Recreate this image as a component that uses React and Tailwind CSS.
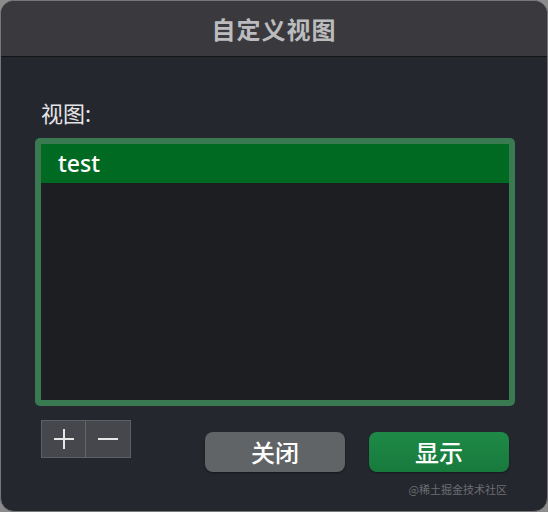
import React from 'react';

export default function App() {
  return (
    <div
      className="w-[548px] h-[512px] bg-[#8c8c8c]"
      style={{ fontFamily: '"Noto Sans CJK SC", "Noto Sans", sans-serif' }}
    >
      <div className="w-full h-full rounded-[14px] border border-[#77777a] overflow-hidden flex flex-col bg-[#25272e]">
        {/* title bar */}
        <div className="h-[56px] shrink-0 bg-[#3a3a3e] border-b border-[#141416] flex items-center justify-center">
          <span className="text-[24px] font-bold text-[#bcbcbe] tracking-[1px] leading-none">
            自定义视图
          </span>
        </div>

        <div className="flex-1 flex flex-col px-[34px]">
          <div className="mt-[44px] ml-[6px] text-[22px] text-[#e4e4e6] leading-none">视图:</div>

          {/* list */}
          <div className="mt-[15px] h-[268px] w-[480px] rounded-[5px] bg-[#3a7a50] p-[6px]">
            <div className="w-full h-full bg-[#1c1e22]">
              <div className="h-[39px] bg-[#006a22] flex items-center pl-[17px]">
                <span className="text-white text-[23px] font-medium leading-none" style={{ fontFamily: '"Noto Sans", sans-serif' }}>
                  test
                </span>
              </div>
            </div>
          </div>

          {/* bottom row */}
          <div className="flex mt-[14px]">
            <div className="ml-[6px] flex h-[38px] border border-[#5e6064] bg-[#45474c]">
              <button className="w-[44px] h-full border-r border-[#65676b] flex items-center justify-center text-[#e0e0e0]">
                <svg width="22" height="22" viewBox="0 0 22 22">
                  <path d="M11 1v20M1 11h20" stroke="#e6e6e6" strokeWidth="2" />
                </svg>
              </button>
              <button className="w-[44px] h-full flex items-center justify-center">
                <svg width="22" height="22" viewBox="0 0 22 22">
                  <path d="M1 11h20" stroke="#e6e6e6" strokeWidth="2" />
                </svg>
              </button>
            </div>
            <button className="ml-[74px] mt-[12px] w-[140px] h-[40px] rounded-[8px] bg-[#616466] text-white text-[24px] font-medium flex items-center justify-center shadow-[0_1px_2px_rgba(0,0,0,0.4)]">
              关闭
            </button>
            <button className="ml-[24px] mt-[12px] w-[140px] h-[40px] rounded-[8px] bg-gradient-to-b from-[#1e8a48] to-[#177a3c] text-white text-[24px] font-medium flex items-center justify-center shadow-[0_1px_2px_rgba(0,0,0,0.4)]">
              显示
            </button>
          </div>

          <div className="mt-[12px] flex justify-end pr-[6px]">
            <span className="text-[11px] text-[#6c6e72] leading-none">@稀土掘金技术社区</span>
          </div>
        </div>
      </div>
    </div>
  );
}
